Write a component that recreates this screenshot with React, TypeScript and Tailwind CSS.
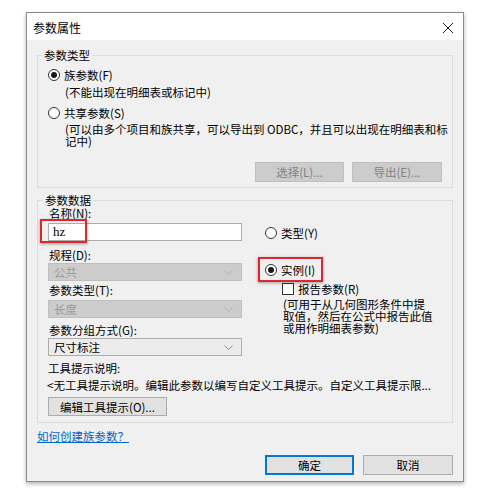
import React from 'react';

// Revit-style "参数属性" dialog, drawn as a Windows 10 form.

function Radio({ checked }: { checked?: boolean }) {
  return (
    <span className="w-[12px] h-[12px] rounded-full border border-[#333333] bg-white flex items-center justify-center shrink-0">
      {checked && <span className="w-[6px] h-[6px] rounded-full bg-[#1a1a1a]" />}
    </span>
  );
}

function Chevron({ color }: { color: string }) {
  return (
    <svg width="9" height="5" viewBox="0 0 9 5" className="shrink-0">
      <path d="M0.5 0.5 L4.5 4.5 L8.5 0.5" fill="none" stroke={color} strokeWidth="1" />
    </svg>
  );
}

function Select({ value, disabled }: { value: string; disabled?: boolean }) {
  return (
    <div
      className={
        disabled
          ? 'h-[18px] w-[194px] flex items-center justify-between pl-[5px] pr-[8px] bg-[#cccccc] border border-[#bfbfbf] text-[#9a9a9a]'
          : 'h-[18px] w-[194px] flex items-center justify-between pl-[5px] pr-[8px] bg-[#ececec] border border-[#adadad] text-black'
      }
    >
      <span>{value}</span>
      <Chevron color={disabled ? '#b0b0b0' : '#8a8a8a'} />
    </div>
  );
}

export default function App() {
  return (
    <div className="min-h-[493px] bg-white pt-[12px] pl-[26px] font-['Noto_Sans_CJK_SC',sans-serif] text-[11.5px] leading-[12px] text-black">
      <div className="w-[438px] h-[470px] border border-[#8c8c8c] bg-[#f0f0f0] shadow-[0_2px_4px_rgba(0,0,0,0.3)] flex flex-col">
        {/* title bar */}
        <div className="h-[27px] bg-white flex items-center justify-between pl-[6px] pr-[10px] pt-[2px]">
          <span className="text-[12px]">参数属性</span>
          <svg width="10" height="10" viewBox="0 0 10 10">
            <path d="M0 0 L10 10 M10 0 L0 10" stroke="#1a1a1a" strokeWidth="1" />
          </svg>
        </div>

        <div className="flex-1 px-[10px] pt-[8px]">
          {/* 参数类型 */}
          <fieldset className="min-w-0 border border-[#dcdcdc] px-[10px] pb-[5px]">
            <legend className="ml-[-6px] px-[2px] h-[14px] leading-[14px]">参数类型</legend>
            <div className="mt-[6px] h-[14px] flex items-center gap-[4px]">
              <Radio checked />
              <span>族参数(F)</span>
            </div>
            <div className="mt-[4px] ml-[17px] h-[12px]">(不能出现在明细表或标记中)</div>
            <div className="mt-[8px] h-[14px] flex items-center gap-[4px]">
              <Radio />
              <span>共享参数(S)</span>
            </div>
            <div className="mt-[3px] ml-[17px] leading-[12px] whitespace-nowrap">
              (可以由多个项目和族共享，可以导出到 ODBC，并且可以出现在明细表和标
              <br />
              记中)
            </div>
            <div className="mt-[15px] flex justify-end gap-[8px]">
              <div className="w-[89px] h-[20px] bg-[#cccccc] border border-[#bfbfbf] text-[#838383] flex items-center justify-center">
                选择(L)...
              </div>
              <div className="w-[90px] h-[20px] bg-[#cccccc] border border-[#bfbfbf] text-[#838383] flex items-center justify-center">
                导出(E)...
              </div>
            </div>
          </fieldset>

          {/* 参数数据 */}
          <fieldset className="min-w-0 mt-[5px] border border-[#dcdcdc] px-[10px] pb-[6px]">
            <legend className="ml-[-5px] px-[2px] h-[14px] leading-[14px]">参数数据</legend>
            <div className="flex">
              <div className="w-[194px]">
                <div className="h-[12px] pl-[1px]">名称(N):</div>
                <div className="relative mt-[4px]">
                  <div className="h-[18px] bg-white border border-[#adadad] flex items-center pl-[4px] font-['Liberation_Serif',serif] text-[13px]">
                    hz
                  </div>
                  <div className="absolute left-[-8px] top-[-4px] w-[47px] h-[24px] border-2 border-[#e0262a] shadow-[0_1px_3px_rgba(0,0,0,0.35)]" />
                </div>
                <div className="mt-[8px] h-[12px] pl-[1px]">规程(D):</div>
                <div className="mt-[2px]">
                  <Select value="公共" disabled />
                </div>
                <div className="mt-[3px] h-[12px] pl-[1px]">参数类型(T):</div>
                <div className="mt-[4px]">
                  <Select value="长度" disabled />
                </div>
                <div className="mt-[6px] h-[12px] pl-[1px]">参数分组方式(G):</div>
                <div className="mt-[2px]">
                  <Select value="尺寸标注" />
                </div>
              </div>

              <div className="ml-[23px]">
                <div className="mt-[19px] h-[14px] flex items-center gap-[4px]">
                  <Radio />
                  <span>类型(Y)</span>
                </div>
                <div className="relative mt-[23px] h-[14px] flex items-center gap-[4px]">
                  <Radio checked />
                  <span>实例(I)</span>
                  <div className="absolute left-[-7px] top-[-6px] w-[65px] h-[25px] border-2 border-[#e0262a] shadow-[0_1px_3px_rgba(0,0,0,0.35)]" />
                </div>
                <div className="mt-[5px] ml-[17px] h-[14px] flex items-center gap-[4px]">
                  <span className="w-[12px] h-[12px] border border-[#333333] bg-white shrink-0" />
                  <span>报告参数(R)</span>
                </div>
                <div className="mt-[2px] ml-[18px] leading-[12px] whitespace-nowrap">
                  (可用于从几何图形条件中提
                  <br />
                  取值，然后在公式中报告此值
                  <br />
                  或用作明细表参数)
                </div>
              </div>
            </div>

            <div className="mt-[6px] h-[12px]">工具提示说明:</div>
            <div className="mt-[5px] h-[12px] ml-[-1px] whitespace-nowrap">
              &lt;无工具提示说明。编辑此参数以编写自定义工具提示。自定义工具提示限...
            </div>
            <div className="mt-[6px] w-[119px] h-[19px] bg-[#e1e1e1] border border-[#adadad] flex items-center justify-center">
              编辑工具提示(O)...
            </div>
          </fieldset>

          <div className="mt-[6px] h-[14px] flex items-center">
            <span className="text-[#0066cc] underline">如何创建族参数？</span>
          </div>

          <div className="mt-[12px] flex justify-end gap-[9px]">
            <div className="w-[89px] h-[20px] bg-[#e1e1e1] border-2 border-[#0078d7] flex items-center justify-center">
              确定
            </div>
            <div className="w-[90px] h-[20px] bg-[#e1e1e1] border border-[#adadad] flex items-center justify-center">
              取消
            </div>
          </div>
        </div>
      </div>
    </div>
  );
}
